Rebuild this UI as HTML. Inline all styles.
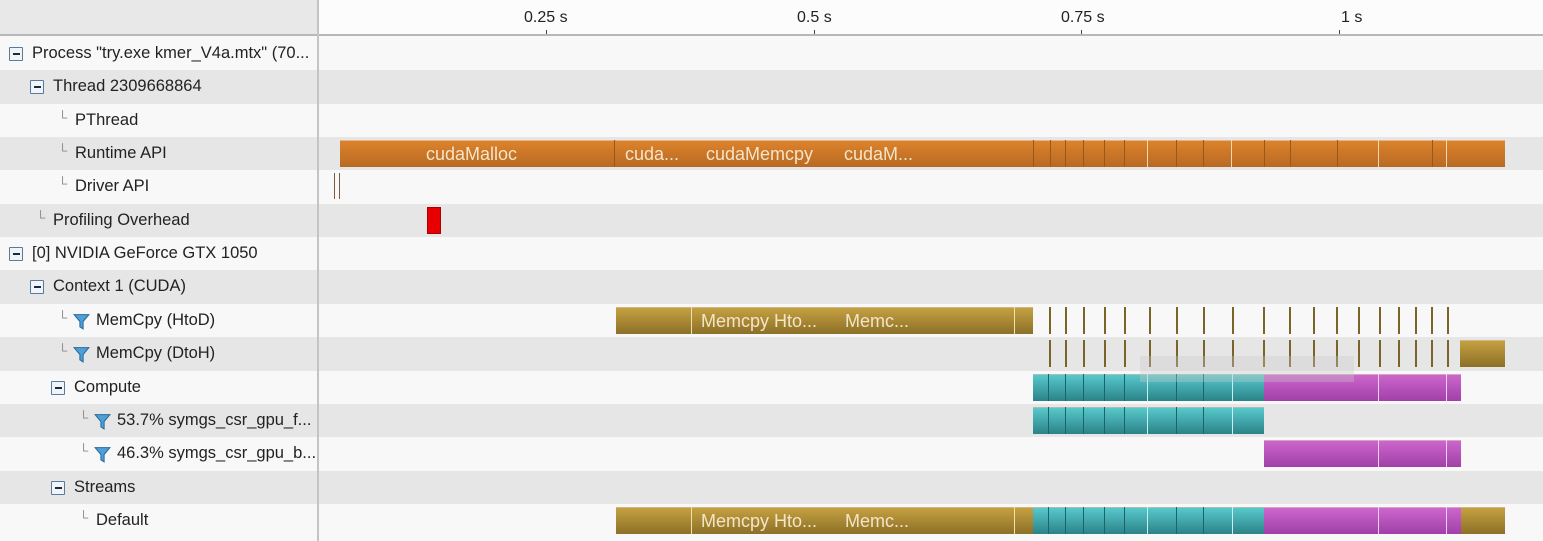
<!DOCTYPE html>
<html><head><meta charset="utf-8"><style>
*{margin:0;padding:0;box-sizing:border-box}
body{width:1543px;height:541px;overflow:hidden;background:#f8f8f8;font-family:"Liberation Sans","DejaVu Sans",sans-serif;position:relative}
.a{position:absolute}
.row{position:absolute;left:0;width:1543px;height:34px}
.g{background:#e6e6e6}.w{background:#f8f8f8}
.lbl{position:absolute;font-size:16.5px;color:#222;line-height:33px;white-space:nowrap}
.box{position:absolute;width:14px;height:14px;border:1px solid #5a7a9a;background:#eef4fa;border-radius:1px}
.box:after{content:"";position:absolute;left:2.5px;top:5px;width:7px;height:2px;background:#1a2a3a}
.el{position:absolute;font-size:13px;color:#888;line-height:33px}
.bar{position:absolute;height:27px;border-top:1px solid rgba(255,230,200,0.6)}
.or{background:linear-gradient(#dc822c,#b86a22)}
.gd{background:linear-gradient(#c4a040,#8c7028)}
.tl{background:linear-gradient(#58c8cc,#2a8388)}
.mg{background:linear-gradient(#cc66cc,#a040a8)}
.bt{color:#f4e4c8;font-size:18px;line-height:26px;position:absolute;white-space:nowrap}
.tk{position:absolute;width:2px;height:27px;background:#7a6428}
.dv{position:absolute;width:1px;height:27px}
.ax{position:absolute;font-size:16px;color:#222;top:9px;white-space:nowrap}
</style></head><body>
<div class="a" style="left:318px;top:0;width:1225px;height:35px;background:#fcfcfc"></div>
<div class="a" style="left:0;top:0;width:318px;height:35px;background:#e8e8e8"></div>
<div class="a" style="left:0;top:34px;width:1543px;height:2px;background:#b8b8b8"></div>
<div id="c"></div>
<div class="a" style="left:317px;top:0;width:2px;height:541px;background:#c4c4c4"></div>
<div class="ax" style="left:524px">0.25 s</div>
<div class="ax" style="left:797px">0.5 s</div>
<div class="ax" style="left:1061px">0.75 s</div>
<div class="ax" style="left:1341px">1 s</div>
<div class="a" style="left:546px;top:30px;width:1px;height:4px;background:#444"></div>
<div class="a" style="left:814px;top:30px;width:1px;height:4px;background:#444"></div>
<div class="a" style="left:1081px;top:30px;width:1px;height:4px;background:#444"></div>
<div class="a" style="left:1339px;top:30px;width:1px;height:4px;background:#444"></div>
<div class="a" style="left:1140px;top:356px;width:214px;height:26px;background:rgba(200,200,200,0.35)"></div>
<script>
var c=document.getElementById('c'),h='';
function T(i){return 37+i*33.35;}
var rows=[
['box',9,32,'Process "try.exe kmer_V4a.mtx" (70...'],
['box',30,53,'Thread 2309668864'],
['el',58,75,'PThread'],
['el',58,75,'Runtime API'],
['el',58,75,'Driver API'],
['el',36,53,'Profiling Overhead'],
['box',9,32,'[0] NVIDIA GeForce GTX 1050'],
['box',30,53,'Context 1 (CUDA)'],
['f',58,96,'MemCpy (HtoD)',73],
['f',58,96,'MemCpy (DtoH)',73],
['box',51,74,'Compute'],
['f',79,117,'53.7% symgs_csr_gpu_f...',94],
['f',79,117,'46.3% symgs_csr_gpu_b...',94],
['box',51,74,'Streams'],
['el',79,96,'Default']];
rows.forEach(function(r,i){var t=T(i);
h+='<div class="row '+(i%2?'g':'w')+'" style="top:'+t+'px"></div>';
if(r[0]=='box')h+='<div class="box" style="left:'+r[1]+'px;top:'+(t+10)+'px"></div>';
else h+='<div class="el" style="left:'+r[1]+'px;top:'+(t-3)+'px">└</div>';
if(r[0]=='f')h+='<svg class="a" style="left:'+r[4]+'px;top:'+(t+9)+'px" width="17" height="17" viewBox="0 0 16 16"><path d="M1 1.5H15L9.5 8V15L6.5 13V8Z" fill="#4ea0d8" stroke="#2a6a9a" stroke-width="1"/></svg>';
h+='<div class="lbl" style="left:'+r[2]+'px;top:'+t+'px">'+r[3]+'</div>';});
function bar(i,x1,x2,cl,txt){h+='<div class="bar '+cl+'" style="left:'+x1+'px;top:'+(T(i)+3)+'px;width:'+(x2-x1)+'px">'+(txt||'')+'</div>';}
function dv(i,x,col){h+='<div class="dv" style="left:'+x+'px;top:'+(T(i)+3)+'px;background:'+col+'"></div>';}
bar(3,340,1505,'or','<span class="bt" style="left:86px">cudaMalloc</span><span class="bt" style="left:285px">cuda...</span><span class="bt" style="left:366px">cudaMemcpy</span><span class="bt" style="left:504px">cudaM...</span>');
[614,1033,1050,1065,1083,1104,1124,1176,1203,1264,1290,1337,1432].forEach(function(x){dv(3,x,'#9a5818')});
[1147,1231,1378,1446].forEach(function(x){dv(3,x,'#f4d8b0')});
h+='<div class="a" style="left:334px;top:'+(T(4)+3)+'px;width:1px;height:26px;background:#7a5a40"></div><div class="a" style="left:339px;top:'+(T(4)+3)+'px;width:1px;height:26px;background:#7a5a40"></div>';
h+='<div class="a" style="left:427px;top:'+(T(5)+3)+'px;width:14px;height:27px;background:#e80000;border:1px solid #a00"></div>';
var ticks=[1049,1065,1083,1104,1124,1149,1176,1203,1232,1263,1289,1313,1336,1358,1379,1398,1415,1431,1447];
var gtxt='<span class="bt" style="left:85px">Memcpy Hto...</span><span class="bt" style="left:229px">Memc...</span>';
bar(8,616,1033,'gd',gtxt);
[691,1014].forEach(function(x){dv(8,x,'#f0e0b0')});
ticks.forEach(function(x){h+='<div class="tk" style="left:'+x+'px;top:'+(T(8)+3)+'px"></div>';});
ticks.forEach(function(x){h+='<div class="tk" style="left:'+x+'px;top:'+(T(9)+3)+'px"></div>';});
bar(9,1460,1505,'gd');
function tm(i){bar(i,1033,1264,'tl');[1048,1065,1083,1104,1124,1147,1176,1203,1232].forEach(function(x){dv(i,x,(x==1147||x==1232)?'#c8f0f0':'#1c6468')});}
function mm(i){bar(i,1264,1461,'mg');[1378,1446].forEach(function(x){dv(i,x,'#f4d0f4')});}
tm(10);mm(10);tm(11);mm(12);
bar(14,616,1033,'gd',gtxt);[691,1014].forEach(function(x){dv(14,x,'#f0e0b0')});
tm(14);mm(14);bar(14,1461,1505,'gd');
c.innerHTML=h;
</script>
</body></html>
